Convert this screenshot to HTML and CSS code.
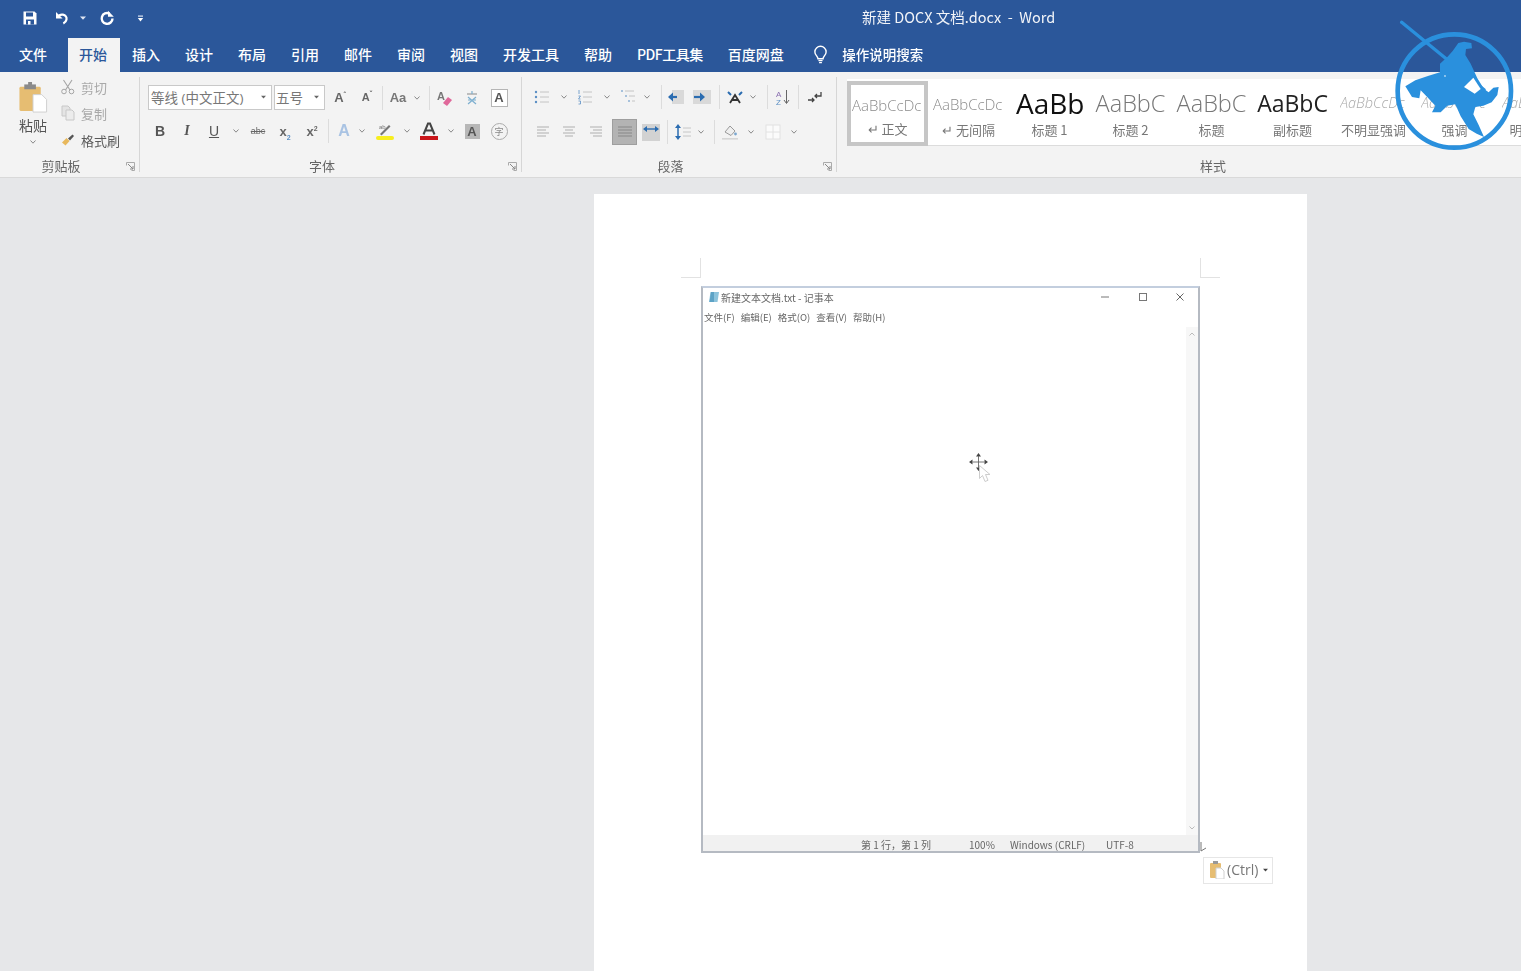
FILE: index.html
```html
<!DOCTYPE html>
<html lang="zh-CN">
<head>
<meta charset="utf-8">
<title>新建 DOCX 文档.docx - Word</title>
<link rel="stylesheet" href="styles.css">
</head>
<body>
<div class="app">
  <header class="titlebar">
    <div class="qat">
      <svg class="q q-save" viewBox="0 0 16 16"><path d="M1.500 1.500h11l2 2v11h-13z" fill="#fff"/><rect x="4" y="2.500" width="7" height="4" fill="#2b579a"/><rect x="4" y="9.500" width="8" height="5" fill="#2b579a"/><rect x="6" y="11" width="2.500" height="3.500" fill="#fff"/></svg>
      <svg class="q q-undo" viewBox="0 0 16 16"><path d="M3.500 7.500c1.500-2.400 3.400-3.200 5.400-2.800 2.600.5 4 2.600 3.600 4.800-.3 1.700-1.400 3-3.200 3.900" fill="none" stroke="#fff" stroke-width="2.200"/><path d="M2 2v6.600h6.600z" fill="#fff"/></svg>
      <svg class="q q-arrow" viewBox="0 0 6 4"><path d="M0 .5h6L3 3.800z" fill="#dfe6f2"/></svg>
      <svg class="q q-redo" viewBox="0 0 16 16"><path d="M10.500 3.600a5.400 5.400 0 1 0 3 4.800" fill="none" stroke="#fff" stroke-width="2.400"/><path d="M9 .8v6h5.800z" fill="#fff"/></svg>
      <svg class="q q-custom" viewBox="0 0 7 7"><rect x="1" y=".5" width="5" height="1.200" fill="#dfe6f2"/><path d="M.8 3h5.400L3.500 6.400z" fill="#fff"/></svg>
    </div>
    <div class="doc-title">新建 DOCX 文档.docx&nbsp; - &nbsp;Word</div>
  </header>

  <nav class="tabs">
    <span class="tab tab-file">文件</span>
    <span class="tab active">开始</span>
    <span class="tab">插入</span>
    <span class="tab">设计</span>
    <span class="tab">布局</span>
    <span class="tab">引用</span>
    <span class="tab">邮件</span>
    <span class="tab">审阅</span>
    <span class="tab">视图</span>
    <span class="tab">开发工具</span>
    <span class="tab">帮助</span>
    <span class="tab tab-pdf">PDF工具集</span>
    <span class="tab">百度网盘</span>
    <span class="tell">
      <svg class="bulb" viewBox="0 0 16 20"><path d="M5.300 14.500c0-2.500-3.300-3.800-3.300-7.300A6 6 0 0 1 14 7.200c0 3.500-3.300 4.800-3.300 7.300z" fill="none" stroke="#fff" stroke-width="1.500"/><path d="M5.800 16.500h4.400M6.500 18.700h3" stroke="#fff" stroke-width="1.400"/></svg>
      操作说明搜索
    </span>
  </nav>

  <section class="ribbon">
    <!-- clipboard -->
    <div class="group g-clip">
      <div class="clip-body">
        <div class="paste">
          <svg class="paste-icon" viewBox="0 0 30 32"><rect x="1" y="5" width="22" height="25" rx="1.500" fill="#e6bd72"/><rect x="6" y="2.500" width="12" height="5" fill="#8a8a8a"/><rect x="10" y="0" width="4" height="4" fill="#8a8a8a"/><path d="M15 13h9l5 5v13H15z" fill="#fff" stroke="#cfcfcf"/></svg>
          <span class="paste-label">粘贴</span>
          <svg class="chev" viewBox="0 0 6 4"><path d="M.5.500L3 3.200 5.500.500" fill="none" stroke="#888"/></svg>
        </div>
        <div class="clip-list">
          <div class="clip-item off">
            <svg class="ico" viewBox="0 0 16 16"><circle cx="4" cy="12.500" r="2.300" fill="none" stroke="#a5a5a5"/><circle cx="11.500" cy="12.500" r="2.300" fill="none" stroke="#a5a5a5"/><path d="M3.500 1l6.500 10M12 1L5.500 11" stroke="#a5a5a5" stroke-width="1.100"/></svg>
            <span>剪切</span>
          </div>
          <div class="clip-item off">
            <svg class="ico" viewBox="0 0 16 16"><path d="M2 1h6l2 2v8H2z" fill="#e4e4e4" stroke="#c8c8c8"/><path d="M6 5h6l2 2v8H6z" fill="#ececec" stroke="#c8c8c8"/></svg>
            <span>复制</span>
          </div>
          <div class="clip-item">
            <svg class="ico" viewBox="0 0 16 16"><path d="M6.500 6l3 3-4 4.500-3.500-3z" fill="#e8b85c"/><path d="M8 6.500l4.500-4 1.500 1.500-4 4.500z" fill="#555"/></svg>
            <span>格式刷</span>
          </div>
        </div>
      </div>
      <div class="group-foot"><span class="group-name">剪贴板</span><svg class="launch" viewBox="0 0 9 9"><path d="M.5 3.500v-3h8v8h-3" fill="none" stroke="#aaa"/><path d="M2 2l5 5M7 4v3H4" fill="none" stroke="#888"/></svg></div>
    </div>

    <!-- font -->
    <div class="group g-font">
      <div class="rows">
        <div class="row font-r1">
          <div class="select"><span>等线 (中文正文)</span><svg class="mini" viewBox="0 0 6 4"><path d="M0 .5h6L3 3.800z" fill="#666"/></svg></div>
          <div class="select select-size"><span>五号</span><svg class="mini" viewBox="0 0 6 4"><path d="M0 .5h6L3 3.800z" fill="#666"/></svg></div>
          <b class="txt t13">A<sup>ˆ</sup></b>
          <b class="txt t11">A<sup>ˇ</sup></b>
          <i></i><i class="sep"></i><i></i>
          <b class="txt t13 soft">Aa</b>
          <svg class="chev" viewBox="0 0 6 4"><path d="M.5.500L3 3.200 5.500.500" fill="none" stroke="#888"/></svg>
          <i></i><i class="sep"></i><i></i>
          <svg class="ico" viewBox="0 0 16 16"><text x="0" y="10" class="svg-a">A</text><path d="M6 13l5-6 4 3-5 6z" fill="#e0689a"/></svg>
          <svg class="ico" viewBox="0 0 16 16"><path d="M3 4h10" stroke="#999" stroke-width="1.200"/><path d="M8 1v3M4 7l8 7M12 7l-8 7M4 10h8" stroke="#7dafcf" stroke-width="1.200" fill="none"/></svg>
          <span class="boxed">A</span>
        </div>
        <div class="row font-r2">
          <b class="txt t14">B</b>
          <em class="txt t14 it">I</em>
          <span class="txt t14 un">U</span>
          <svg class="chev" viewBox="0 0 6 4"><path d="M.5.500L3 3.200 5.500.500" fill="none" stroke="#888"/></svg>
          <span class="txt t9 st">abc</span>
          <span class="txt t13 sc">x<sub>2</sub></span>
          <span class="txt t13 sc">x<sup>2</sup></span>
          <i></i><i class="sep"></i>
          <span class="txt t15 fx">A</span>
          <svg class="chev" viewBox="0 0 6 4"><path d="M.5.500L3 3.200 5.500.500" fill="none" stroke="#888"/></svg>
          <svg class="ico-lg" viewBox="0 0 18 18"><path d="M4 12l9-9 1.500 1.500-9 9z" fill="#777"/><text x="3" y="7" class="svg-s">ab</text><rect x="0" y="14" width="18" height="4" rx="2" fill="#f7ee1e"/></svg>
          <svg class="chev" viewBox="0 0 6 4"><path d="M.5.500L3 3.200 5.500.500" fill="none" stroke="#888"/></svg>
          <svg class="ico-lg" viewBox="0 0 18 18"><path d="M3.500 12.500L8 1.500h2l4.500 11M5.500 8.500h7" fill="none" stroke="#444" stroke-width="2"/><rect x="0" y="14" width="18" height="4" fill="#c9161b"/></svg>
          <svg class="chev" viewBox="0 0 6 4"><path d="M.5.500L3 3.200 5.500.500" fill="none" stroke="#888"/></svg>
          <span class="shaded">A</span>
          <span class="circled">字</span>
        </div>
      </div>
      <div class="group-foot"><span class="group-name">字体</span><svg class="launch" viewBox="0 0 9 9"><path d="M.5 3.500v-3h8v8h-3" fill="none" stroke="#aaa"/><path d="M2 2l5 5M7 4v3H4" fill="none" stroke="#888"/></svg></div>
    </div>

    <!-- paragraph -->
    <div class="group g-para">
      <div class="rows">
        <div class="row para-r1">
          <svg class="ico" viewBox="0 0 16 16"><g fill="#5b8fc4"><circle cx="2" cy="3" r="1.200"/><circle cx="2" cy="8" r="1.200"/><circle cx="2" cy="13" r="1.200"/></g><path d="M6 3h9M6 8h9M6 13h9" stroke="#c4c4c4"/></svg>
          <svg class="chev" viewBox="0 0 6 4"><path d="M.5.500L3 3.200 5.500.500" fill="none" stroke="#888"/></svg>
          <svg class="ico" viewBox="0 0 16 16"><path d="M2 1v4M1.500 7h2l-2 3h2M1.500 12h2v3h-2" fill="none" stroke="#5b8fc4" stroke-width=".8"/><path d="M6 3h9M6 8h9M6 13h9" stroke="#c4c4c4"/></svg>
          <svg class="chev" viewBox="0 0 6 4"><path d="M.5.500L3 3.200 5.500.500" fill="none" stroke="#888"/></svg>
          <svg class="ico" viewBox="0 0 16 16"><path d="M1 2h2M5 7h2M8 12h2" stroke="#5b8fc4"/><path d="M5 2h9M9 7h6M12 12h3" stroke="#c4c4c4"/></svg>
          <svg class="chev" viewBox="0 0 6 4"><path d="M.5.500L3 3.200 5.500.500" fill="none" stroke="#888"/></svg>
          <i></i><i class="sep"></i>
          <svg class="ico-lg" viewBox="0 0 18 14"><rect x="6" y="0" width="12" height="14" fill="#d9d9d9"/><path d="M3 7h8" stroke="#2b6cb0" stroke-width="2.200"/><path d="M7 2.500L2 7l5 4.500z" fill="#2b6cb0"/></svg>
          <svg class="ico-lg" viewBox="0 0 18 14"><rect x="0" y="0" width="18" height="14" fill="#d9d9d9"/><path d="M1 7h8" stroke="#2b6cb0" stroke-width="2.200"/><path d="M7 2.500L12 7l-5 4.500z" fill="#2b6cb0"/></svg>
          <i></i><i class="sep"></i>
          <svg class="ico-lg" viewBox="0 0 18 16"><path d="M4 14L9 6l5 8M6 11h6" fill="none" stroke="#333" stroke-width="1.800"/><path d="M2 3l3 3M16 3l-3 3" stroke="#2b6cb0" stroke-width="2"/></svg>
          <svg class="chev" viewBox="0 0 6 4"><path d="M.5.500L3 3.200 5.500.500" fill="none" stroke="#888"/></svg>
          <i></i><i class="sep"></i>
          <svg class="ico" viewBox="0 0 16 16"><text x="1" y="7.500" class="svg-z">A</text><text x="1" y="15.500" class="svg-z2">Z</text><path d="M11.500 1v13M9 11l2.500 3.500L14 11" fill="none" stroke="#666"/></svg>
          <i class="sep"></i>
          <svg class="ico" viewBox="0 0 16 16"><path d="M1 11h6M5 9l2 2-2 2" fill="none" stroke="#444" stroke-width="1.300"/><path d="M14 3v4H8M10 5L8 7l2 2" fill="none" stroke="#444" stroke-width="1.300"/></svg>
        </div>
        <div class="row para-r2">
          <svg class="ico" viewBox="0 0 16 16"><path d="M2 3h12M2 6h9M2 9h12M2 12h9" stroke="#c6c6c6" stroke-width="1.500"/></svg>
          <svg class="ico" viewBox="0 0 16 16"><path d="M2 3h12M4 6h8M2 9h12M4 12h8" stroke="#c6c6c6" stroke-width="1.500"/></svg>
          <svg class="ico" viewBox="0 0 16 16"><path d="M2 3h12M5 6h9M2 9h12M5 12h9" stroke="#c6c6c6" stroke-width="1.500"/></svg>
          <span class="justify"><svg class="ico" viewBox="0 0 16 16"><path d="M1 3h14M1 6h14M1 9h14M1 12h14" stroke="#979797" stroke-width="1.500"/></svg></span>
          <i></i>
          <span class="distribute"><svg class="dist-arrow" viewBox="0 0 18 8"><path d="M3 4h12" stroke="#2b6cb0" stroke-width="1.400"/><path d="M5 1L1 4l4 3zM13 1l4 3-4 3z" fill="#2b6cb0"/></svg></span>
          <i></i><i class="sep"></i>
          <svg class="ico-lg" viewBox="0 0 18 18"><path d="M4 3v12" stroke="#2b6cb0" stroke-width="1.500"/><path d="M1 5l3-4 3 4zM1 13l3 4 3-4z" fill="#2b6cb0"/><path d="M9 5h8M9 9h8M9 13h8" stroke="#c6c6c6"/></svg>
          <svg class="chev" viewBox="0 0 6 4"><path d="M.5.500L3 3.200 5.500.500" fill="none" stroke="#888"/></svg>
          <i></i><i class="sep"></i>
          <svg class="ico-lg" viewBox="0 0 18 18"><path d="M4 9l5-6 5 5-4 4.500z" fill="#efefef" stroke="#999"/><circle cx="14.500" cy="11" r="1.400" fill="#7ba7cf"/><rect x="1" y="15" width="16" height="1.600" fill="#d6d6d6"/></svg>
          <svg class="chev" viewBox="0 0 6 4"><path d="M.5.500L3 3.200 5.500.500" fill="none" stroke="#888"/></svg>
          <svg class="ico" viewBox="0 0 16 16"><rect x="1" y="1" width="14" height="14" fill="#fbfbfb" stroke="#e2e2e2"/><path d="M8 1v14M1 8h14" stroke="#e2e2e2"/></svg>
          <svg class="chev" viewBox="0 0 6 4"><path d="M.5.500L3 3.200 5.500.500" fill="none" stroke="#888"/></svg>
        </div>
      </div>
      <div class="group-foot"><span class="group-name">段落</span><svg class="launch" viewBox="0 0 9 9"><path d="M.5 3.500v-3h8v8h-3" fill="none" stroke="#aaa"/><path d="M2 2l5 5M7 4v3H4" fill="none" stroke="#888"/></svg></div>
    </div>

    <!-- styles -->
    <div class="group g-styles">
      <div class="gallery">
        <div class="style selected"><div class="prev p-body">AaBbCcDc</div><div class="lab">↵ 正文</div></div>
        <div class="style"><div class="prev p-body">AaBbCcDc</div><div class="lab">↵ 无间隔</div></div>
        <div class="style"><div class="prev p-h1">AaBbC</div><div class="lab">标题 1</div></div>
        <div class="style"><div class="prev p-h2">AaBbC</div><div class="lab">标题 2</div></div>
        <div class="style"><div class="prev p-h2">AaBbC</div><div class="lab">标题</div></div>
        <div class="style"><div class="prev p-sub">AaBbC</div><div class="lab">副标题</div></div>
        <div class="style"><div class="prev p-em">AaBbCcDc</div><div class="lab">不明显强调</div></div>
        <div class="style"><div class="prev p-em">AaBbCcDc</div><div class="lab">强调</div></div>
        <div class="style"><div class="prev p-em">AaBbCcDc</div><div class="lab">明显强调</div></div>
      </div>
      <div class="group-foot"><span class="group-name">样式</span></div>
    </div>
  </section>

  <main class="canvas">
    <div class="page">
      <i class="crop crop-l"></i>
      <i class="crop crop-r"></i>
      <div class="notepad">
        <div class="np-title">
          <svg class="np-icon" viewBox="0 0 12 12"><path d="M2.500 1H11L9.500 11H1z" fill="#8cc3dc"/><path d="M3 1h3v10H1.500z" fill="#5da3c6"/></svg>
          <span class="np-name">新建文本文档.txt - 记事本</span>
          <span class="np-ctl">
            <svg viewBox="0 0 10 10"><path d="M1 5h8" stroke="#777"/></svg>
            <svg viewBox="0 0 10 10"><rect x="1.500" y="1.500" width="7" height="7" fill="none" stroke="#777"/></svg>
            <svg viewBox="0 0 10 10"><path d="M1.500 1.500l7 7M8.500 1.500l-7 7" stroke="#666"/></svg>
          </span>
        </div>
        <div class="np-menu"><span>文件(F)</span><span>编辑(E)</span><span>格式(O)</span><span>查看(V)</span><span>帮助(H)</span></div>
        <div class="np-body">
          <div class="np-scroll">
            <svg viewBox="0 0 6 4"><path d="M.5 3.500L3 1l2.500 2.500" fill="none" stroke="#bbb"/></svg>
            <svg viewBox="0 0 6 4"><path d="M.5.500L3 3l2.500-2.500" fill="none" stroke="#bbb"/></svg>
          </div>
        </div>
        <div class="np-status"><span></span><span>第 1 行，第 1 列</span><span>100%</span><span>Windows (CRLF)</span><span>UTF-8</span></div>
      </div>
      <svg class="cursor" viewBox="0 0 26 32"><g fill="#444"><path d="M9.500 0l2.500 3.500H7zM9.500 18l2.500-3.500H7zM0 9l3.500-2.500v5zM19 9l-3.500-2.500v5z"/></g><path d="M9.500 3v12M3.500 9h12" stroke="#666" stroke-width=".9"/><path d="M10.500 12.500v13l3-3 2.500 6 3-1.200-2.500-5.800h4.500z" fill="#fff" stroke="#cdcdcd"/></svg>
      <svg class="anchor" viewBox="0 0 10 10"><path d="M3 0v9M3 9l5-3" stroke="#777" fill="none"/></svg>
      <div class="paste-tag">
        <svg class="tag-icon" viewBox="0 0 15 18"><rect x="0" y="2" width="11" height="15" rx="1" fill="#e6bd72"/><rect x="3" y="0" width="5" height="3" fill="#999"/><path d="M6 7h5l3 3v8H6z" fill="#fff" stroke="#d0d0d0"/></svg>
        <span>(Ctrl)</span>
        <svg class="mini" viewBox="0 0 6 4"><path d="M0 .5h6L3 3.800z" fill="#444"/></svg>
      </div>
    </div>
  </main>
</div>

<svg class="logo" viewBox="0 0 390 420">
  <circle cx="193" cy="228" r="170" fill="none" stroke="#2a90dd" stroke-width="14"/>
  <path d="M35 22L282 224" stroke="#2a90dd" stroke-width="10" stroke-linecap="round"/>
  <path d="M188 108L205 84 222 80 244 84 246 100 228 102 226 120 242 146 252 168 262 190 282 222 296 232 310 218 326 216 322 240 305 262 280 272 256 276 250 298 266 330 282 366 260 356 236 342 212 304 196 268 172 272 152 292 126 292 136 272 108 242 92 226 88 250 66 246 46 214 76 196 116 182 150 172 150 146 172 126Z" fill="#2a90dd"/>
  <path d="M222 216L250 188 272 222 254 236Z" fill="#fff"/>
  <circle cx="165" cy="183" r="2.500" fill="#fff"/>
</svg>
</body>
</html>
```

FILE: styles.css
```css
* { box-sizing: border-box; }
html, body { margin: 0; height: 100%; }
body {
  width: 1521px;
  height: 971px;
  overflow: hidden;
  position: relative;
  background: #e6e7e9;
  font-family: "Open Sans", "Noto Sans CJK SC", sans-serif;
}
.app {
  display: flex;
  flex-direction: column;
  height: 971px;
  filter: blur(.55px);
}

/* title bar */
.titlebar {
  flex: 0 0 38px;
  display: flex;
  align-items: center;
  background: #2b579a;
  color: #fff;
  position: relative;
}
.qat { display: flex; align-items: center; padding: 0 0 2px 22px; }
.q { display: block; }
.q-save { width: 16px; height: 16px; }
.q-undo { width: 16px; height: 16px; margin-left: 16px; }
.q-arrow { width: 6px; height: 4px; margin-left: 10px; }
.q-redo { width: 16px; height: 16px; margin-left: 13px; }
.q-custom { width: 7px; height: 7px; margin-left: 22px; }
.doc-title {
  margin-left: 718px;
  padding-bottom: 6px;
  font-size: 14.500px;
  color: #f2f4f8;
  white-space: nowrap;
  font-family: "Noto Sans CJK SC", "Open Sans", sans-serif;
}

/* tabs */
.tabs {
  flex: 0 0 34px;
  display: flex;
  align-items: stretch;
  padding-left: 6.500px;
  background: #2b579a;
  color: #fff;
  font-size: 14px;
  font-weight: 500;
  line-height: 32px;
  white-space: nowrap;
  font-family: "Noto Sans CJK SC", sans-serif;
}
.tab { padding: 0 12.500px; }
.tab-file { margin-right: 7px; }
.tab-pdf { letter-spacing: -.5px; }
.tab.active { margin-left: 1px; padding-left: 11.500px; background: #f3f3f3; color: #2b579a; }
.tell { display: flex; align-items: center; margin-left: 17px; padding-bottom: 2px; font-size: 13.500px; }
.bulb { width: 15px; height: 19px; margin-right: 14px; }

/* ribbon */
.ribbon {
  flex: 0 0 106px;
  display: flex;
  overflow: hidden;
  background: #f3f3f3;
  border-bottom: 1px solid #d9d9d9;
  color: #555;
  font-family: "Noto Sans CJK SC", sans-serif;
}
.group {
  flex: none;
  height: 105px;
  display: flex;
  flex-direction: column;
  position: relative;
}
.group::after {
  content: "";
  position: absolute;
  right: 0;
  top: 5px;
  bottom: 5px;
  width: 1px;
  background: #d6d6d6;
}
.g-clip { width: 140px; }
.g-font { width: 382px; padding-left: 8px; }
.g-para { width: 315px; padding-left: 6px; }
.g-styles { width: 752px; }
.g-styles::after { display: none; }
.group-foot {
  margin-top: auto;
  margin-bottom: 1px;
  height: 20px;
  display: flex;
  align-items: center;
}
.g-font .group-foot { margin-left: -8px; }
.g-para .group-foot { margin-left: -6px; }
.group-name { flex: 1; text-align: center; font-size: 13px; line-height: 20px; color: #666; }
.launch { flex: none; width: 9px; height: 9px; margin: 0 5px 0 4px; }

/* clipboard */
.clip-body { display: flex; }
.paste {
  width: 60px;
  padding: 10px 0 0 6px;
  display: flex;
  flex-direction: column;
  align-items: center;
}
.paste-icon { width: 30px; height: 31px; }
.paste-label { font-size: 14px; line-height: 20px; margin-top: 2px; color: #555; }
.paste .chev { margin-top: 5px; }
.chev { width: 6px; height: 4px; justify-self: center; }
.clip-list { padding-top: 2px; }
.clip-item { display: flex; align-items: center; height: 26px; font-size: 13px; color: #5a5a5a; }
.clip-item:last-child { margin-top: 1px; }
.clip-item.off { color: #a9a9a9; }
.clip-item .ico { margin-right: 5px; }
.ico { width: 16px; height: 16px; display: block; }
.ico-lg { width: 18px; height: 18px; display: block; }

/* rows */
.rows { padding-top: 13px; display: flex; flex-direction: column; gap: 10px; }
.row { display: grid; align-items: center; justify-items: center; height: 24px; }
.font-r1 { grid-template-columns: 124px 53px 30px 24px 3px 1px 1px 28px 9px 8px 1px 1.500px 27px 27px 27px; }
.font-r2 { margin-left: -1.500px; grid-template-columns: 27px 27px 27px 17px 27px 27px 27px 2.500px 1px 30px 6px 40px 4px 40px 4px 38px 16px; }
.para-r1 { grid-template-columns: 28px 16px 26px 18px 24px 14px 7px 1px 26px 28px 3px 1px 30px 6px 11px 1px 30px 1px 32px; }
.para-r2 { grid-template-columns: 30px 22px 32px 25px 5px 18px 7px 1px 30px 6px 10px 1px 30px 12px 32px 10px; }
.sep { width: 1px; height: 24px; background: #dcdcdc; display: block; }
.select {
  display: flex;
  align-items: center;
  justify-content: space-between;
  width: 124px;
  height: 25px;
  padding: 0 5px 2px 2px;
  background: #fff;
  border: 1px solid #c9c9c9;
  font-size: 13.500px;
  color: #777;
  white-space: nowrap;
  font-family: "Open Sans", "Noto Sans CJK SC", sans-serif;
}
.select-size { width: 51px; justify-self: end; padding-left: 1px; }
.mini { width: 5px; height: 4px; flex: none; }
.txt { font-family: "Liberation Sans", sans-serif; color: #666; line-height: 1; font-style: normal; font-weight: 400; }
b.txt { font-weight: 700; }
.soft { color: #777; }
.t9 { font-size: 9px; }
.t11 { font-size: 11px; }
.t13 { font-size: 13px; }
.t14 { font-size: 14px; color: #555; }
.t15 { font-size: 16px; }
.txt sup, .txt sub { font-size: 7px; line-height: 0; }
.txt sub { color: #5b8fc4; }
.it { font-style: italic; font-family: "Liberation Serif", serif; font-weight: 700; }
.un { text-decoration: underline; }
.st { text-decoration: line-through; }
.sc { font-weight: 700; }
.fx { color: #a9c3e3; font-weight: 700; }
.boxed {
  width: 17px; height: 18px;
  border: 1px solid #b5b5b5;
  background: #fff;
  font: bold 13px/16px "Liberation Sans", sans-serif;
  text-align: center;
  color: #555;
}
.shaded {
  width: 15px; height: 15px;
  background: #b7b7b7;
  font: bold 13px/15px "Liberation Sans", sans-serif;
  text-align: center;
  color: #555;
}
.circled {
  width: 17px; height: 17px;
  border: 1px solid #aaa;
  border-radius: 50%;
  font-size: 9px;
  line-height: 15px;
  text-align: center;
  color: #888;
}
.justify {
  width: 25px; height: 26px;
  display: flex; align-items: center; justify-content: center;
  background: #b3b3b3;
  border: 1px solid #9e9e9e;
}
.distribute {
  width: 18px; height: 17px;
  padding-top: 1px;
  background: #d2d2d2;
}
.dist-arrow { width: 18px; height: 8px; display: block; }
.svg-a { font: bold 11px "Liberation Sans", sans-serif; fill: #777; }
.svg-s { font: 6px "Liberation Sans", sans-serif; fill: #777; }
.svg-z { font: 8px "Liberation Sans", sans-serif; fill: #8a6fb0; }
.svg-z2 { font: 8px "Liberation Sans", sans-serif; fill: #5b8fc4; }

/* styles */
.gallery {
  margin: 7px 0 0 10px;
  height: 67px;
  display: flex;
  align-items: flex-start;
  background: #fff;
  border-bottom: 1px solid #dcdcdc;
}
.style {
  flex: 0 0 81px;
  height: 66px;
  padding-top: 2px;
  text-align: center;
  overflow: hidden;
}
.style.selected {
  height: 65px;
  margin-top: 2px;
  padding-top: 0;
  border: 4px solid #c6c6c6;
}
.prev {
  height: 40px;
  line-height: 44px;
  margin: 0 5px;
  white-space: nowrap;
  overflow: hidden;
  color: #8a8a8a;
  font-family: "Open Sans", sans-serif;
}
.selected .prev { height: 35px; line-height: 38px; margin: 0 1px; }
.prev.p-body { font-size: 15px; font-weight: 300; text-align: left; line-height: 46px; }
.selected .prev.p-body { line-height: 40px; }
.p-h1 { font-size: 28px; color: #111; text-align: left; font-weight: 500; margin-left: 7px; }
.p-h2 { font-size: 23.500px; font-weight: 300; color: #777; }
.p-sub { font-size: 23px; font-weight: 500; color: #222; }
.p-em { font-size: 14.500px; font-style: italic; font-weight: 300; color: #aaa; text-align: left; margin-left: 7px; }
.lab { font-size: 13px; line-height: 18px; color: #777; white-space: nowrap; }

/* canvas */
.canvas { flex: 1; overflow: hidden; padding: 16px 0 0 594px; }
.page {
  position: relative;
  width: 713px;
  height: 900px;
  padding: 92px 0 0 107px;
  background: #fff;
}
.crop { position: absolute; width: 20px; height: 20px; top: 64px; border-bottom: 1px solid #e2e2e2; }
.crop-l { left: 87px; border-right: 1px solid #e2e2e2; }
.crop-r { left: 606px; border-left: 1px solid #e2e2e2; }

/* notepad */
.notepad {
  width: 499px;
  height: 567px;
  display: flex;
  flex-direction: column;
  border: 2px solid #b5bac2;
  border-top-color: #c3cede;
  background: #fff;
  color: #666;
  font-family: "Noto Sans CJK SC", sans-serif;
}
.np-title { flex: 0 0 20px; display: flex; align-items: center; padding: 0 0 2px 5px; font-size: 10px; }
.np-icon { width: 12px; height: 12px; margin-right: 1px; }
.np-name { flex: 1; white-space: nowrap; }
.np-ctl { display: grid; grid-template-columns: 10px 10px 10px; column-gap: 27.500px; margin-right: 13px; }
.np-ctl svg { width: 10px; height: 10px; display: block; }
.np-menu { flex: 0 0 19px; display: flex; gap: 6px; padding-left: 1px; font-size: 9.500px; line-height: 19px; white-space: nowrap; }
.np-body { flex: 1; display: flex; justify-content: flex-end; min-height: 0; }
.np-scroll {
  width: 12px;
  display: flex;
  flex-direction: column;
  justify-content: space-between;
  align-items: center;
  padding: 5px 0;
  background: #f7f7f7;
}
.np-scroll svg { width: 6px; height: 4px; }
.np-status {
  flex: 0 0 16px;
  min-height: 0;
  display: grid;
  grid-template-columns: 158px 108px 41px 96px 1fr;
  padding-top: 2px;
  background: #f1f1f1;
  font-size: 10px;
  line-height: 16px;
  white-space: nowrap;
}
.cursor { position: absolute; left: 375px; top: 259px; width: 26px; height: 32px; }
.anchor { position: absolute; left: 604px; top: 648px; width: 10px; height: 10px; }
.paste-tag {
  position: absolute;
  left: 609px;
  top: 663px;
  width: 70px;
  height: 27px;
  display: flex;
  align-items: center;
  padding: 0 0 2px 6px;
  background: #fff;
  border: 1px solid #e6e6e6;
  font: 14px "Open Sans", sans-serif;
  color: #777;
}
.tag-icon { width: 15px; height: 18px; margin-right: 2px; }
.paste-tag .mini { margin-left: 5px; }

/* watermark logo */
.logo { position: absolute; left: 1390px; top: 15px; width: 130px; height: 140px; filter: blur(.4px); }
```
